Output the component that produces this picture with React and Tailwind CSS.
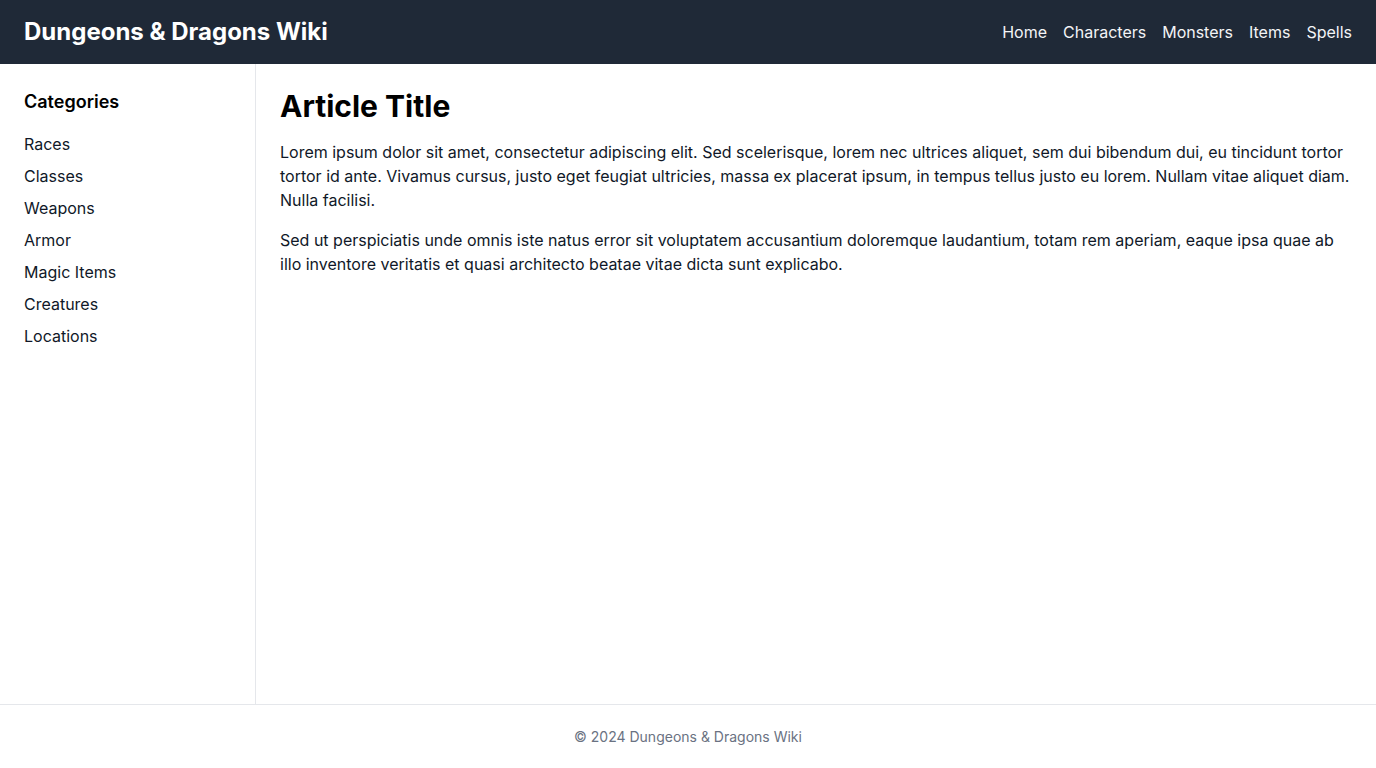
import React from 'react';

const navLinks = ['Home', 'Characters', 'Monsters', 'Items', 'Spells'];
const categories = ['Races', 'Classes', 'Weapons', 'Armor', 'Magic Items', 'Creatures', 'Locations'];

const App = () => {
  return (
    <div className="min-h-screen flex flex-col bg-white text-black font-['Inter',sans-serif]">
      {/* Header */}
      <header className="h-16 bg-[#1f2937] flex items-center justify-between px-6 shrink-0">
        <h1 className="text-2xl font-bold text-white">Dungeons &amp; Dragons Wiki</h1>
        <nav className="flex gap-4">
          {navLinks.map((link) => (
            <a key={link} href="#" className="text-base text-gray-100 hover:text-white">
              {link}
            </a>
          ))}
        </nav>
      </header>

      <div className="flex flex-1">
        {/* Sidebar */}
        <aside className="w-64 shrink-0 border-r border-gray-200 p-6">
          <h2 className="text-lg font-semibold mb-4">Categories</h2>
          <ul className="space-y-2">
            {categories.map((cat) => (
              <li key={cat}>
                <a href="#" className="text-base text-gray-900">{cat}</a>
              </li>
            ))}
          </ul>
        </aside>

        {/* Content */}
        <main className="flex-1 p-6">
          <h1 className="text-3xl font-bold mb-4">Article Title</h1>
          <p className="mb-4 text-gray-900">
            Lorem ipsum dolor sit amet, consectetur adipiscing elit. Sed scelerisque, lorem nec ultrices aliquet, sem dui bibendum dui, eu tincidunt tortor tortor id ante. Vivamus cursus, justo eget feugiat ultricies, massa ex placerat ipsum, in tempus tellus justo eu lorem. Nullam vitae aliquet diam. Nulla facilisi.
          </p>
          <p className="mb-4 text-gray-900">
            Sed ut perspiciatis unde omnis iste natus error sit voluptatem accusantium doloremque laudantium, totam rem aperiam, eaque ipsa quae ab illo inventore veritatis et quasi architecto beatae vitae dicta sunt explicabo.
          </p>
        </main>
      </div>

      {/* Footer */}
      <footer className="h-16 shrink-0 border-t border-gray-200 flex items-center justify-center">
        <p className="text-sm text-gray-500">&copy; 2024 Dungeons &amp; Dragons Wiki</p>
      </footer>
    </div>
  );
};

export default App;
